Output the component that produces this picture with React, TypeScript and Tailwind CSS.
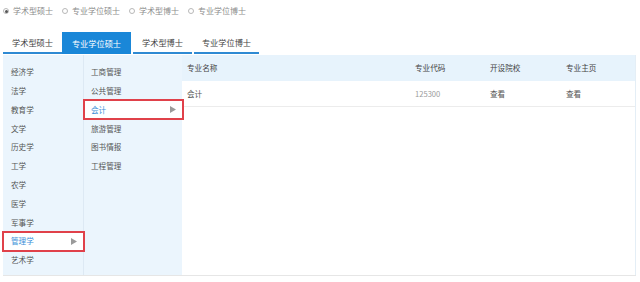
import React from "react";

const radios = ["学术型硕士", "专业学位硕士", "学术型博士", "专业学位博士"];
const tabs = [
  { t: "学术型硕士", cls: "w-[59px]" },
  { t: "专业学位硕士", cls: "w-[69px] mr-[2px]" },
  { t: "学术型博士", cls: "w-[59px] mr-[2px]" },
  { t: "专业学位博士", cls: "w-[65px]" },
];
const cats = ["经济学", "法学", "教育学", "文学", "历史学", "工学", "农学", "医学", "军事学", "管理学", "艺术学"];
const subs = ["工商管理", "公共管理", "会计", "旅游管理", "图书情报", "工程管理"];

function Arrow() {
  return (
    <svg width="6" height="7" viewBox="0 0 6 7" className="ml-auto">
      <path d="M0 0 L6 3.5 L0 7 Z" fill="#9a9a9a" />
    </svg>
  );
}

function Item({ label, active, pl }: { label: string; active: boolean; pl: string }) {
  return (
    <div className={`relative flex items-center h-[18.83px] ${pl} pr-[6px] ${active ? "bg-white text-[#3c8fd8]" : "text-[#555]"}`}>
      <span>{label}</span>
      {active && <Arrow />}
      {active && <div className="absolute -left-[1px] -right-[2px] -top-[1px] -bottom-[1px] border-2 border-[#e0414a] pointer-events-none" />}
    </div>
  );
}

export default function App() {
  return (
    <div className="w-[640px] h-[282px] bg-white overflow-hidden font-['Noto_Sans_CJK_SC','Microsoft_YaHei',sans-serif]">
      <div className="flex items-center h-[22px] pl-[3px] text-[8px] text-[#8c8c8c]">
        {radios.map((r, i) => (
          <div key={r} className="flex items-center mr-[9px]">
            <span className="w-[6px] h-[6px] rounded-full border border-[#b8b8b8] flex items-center justify-center mr-[4px]">
              {i === 0 && <span className="w-[3px] h-[3px] rounded-full bg-[#555]" />}
            </span>
            <span>{r}</span>
          </div>
        ))}
      </div>
      <div className="flex mt-[10px] pl-[3px] h-[22px] text-[8.2px]">
        {tabs.map((tb, i) =>
          i === 1 ? (
            <div key={tb.t} className={`flex items-center justify-center bg-[#1a87d8] text-white h-[22px] ${tb.cls}`}>{tb.t}</div>
          ) : (
            <div key={tb.t} className={`flex items-center justify-center text-[#444] h-[22px] border-b-[2px] border-[#2f8ad3] ${tb.cls}`}>{tb.t}</div>
          )
        )}
      </div>
      <div className="flex ml-[3px] mr-[4px] mt-[1px] h-[221px] border-b border-[#e6e6e6] text-[7.6px]">
        <div className="w-[81px] bg-[#ebf5fd] pt-[7.3px] border-r border-[#dde9f4]">
          {cats.map((c) => (
            <Item key={c} label={c} active={c === "管理学"} pl="pl-[8px]" />
          ))}
        </div>
        <div className="w-[98px] bg-[#ebf5fd] pt-[7.3px]">
          {subs.map((s) => (
            <Item key={s} label={s} active={s === "会计"} pl="pl-[7px]" />
          ))}
        </div>
        <div className="flex-1 bg-white border-r border-[#e4eef6]">
          <div className="grid grid-cols-[228px_75px_76px_1fr] items-center h-[26px] bg-[#e7f3fc] text-[#444] pl-[5px]">
            <span>专业名称</span>
            <span>专业代码</span>
            <span>开设院校</span>
            <span>专业主页</span>
          </div>
          <div className="grid grid-cols-[228px_75px_76px_1fr] items-center h-[26px] border-b border-[#ececec] text-[#555] pl-[5px]">
            <span>会计</span>
            <span className="text-[#9a9a9a]">125300</span>
            <span>查看</span>
            <span>查看</span>
          </div>
        </div>
      </div>
    </div>
  );
}
